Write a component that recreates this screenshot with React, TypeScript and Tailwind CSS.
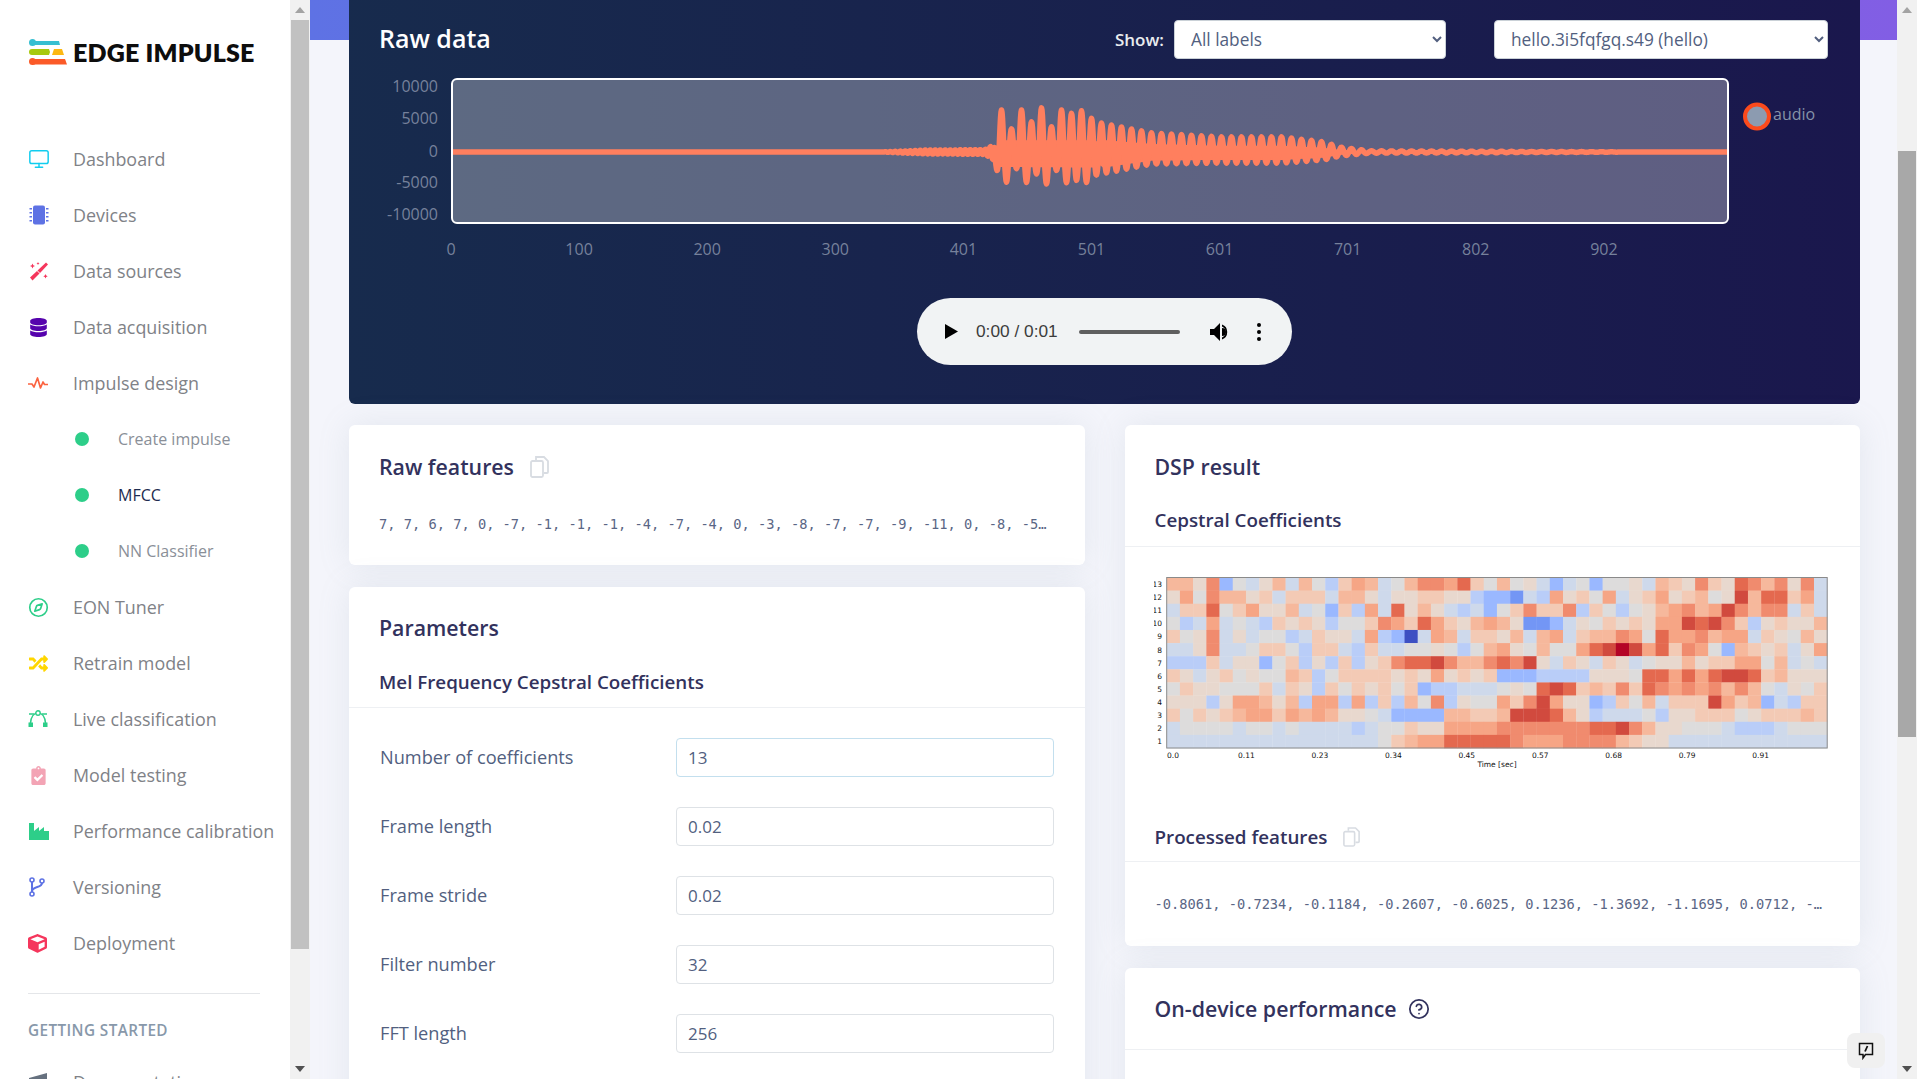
import { CircleHelp, Compass, Monitor } from "lucide-react";
import { FaClipboardCheck, FaCube, FaDatabase, FaRandom } from "react-icons/fa";
import type { ReactNode } from "react";

const CHIP = (
  <svg width="20" height="20" viewBox="0 0 20 20" className="ml-px text-[#5e72e4]">
    <rect x="4" y="0.5" width="12" height="19" rx="2" fill="currentColor" />
    {[3, 7, 11, 15].map((y) => (
      <g key={y} fill="currentColor">
        <rect x="0.5" y={y} width="2.5" height="1.5" />
        <rect x="17" y={y} width="2.5" height="1.5" />
      </g>
    ))}
  </svg>
);

const WAND = (
  <svg width="20" height="20" viewBox="0 0 20 20" className="ml-px text-[#f5365c]">
    <path d="M1 16.500L8 10l2.500 2.500L3.500 19.500z" fill="currentColor" />
    <path d="M8.500 9.500L17 1.500l2 2-8 8.500z" fill="currentColor" />
    <path d="M3.500 2.500l.8 1.700 1.700.8-1.700.8-.8 1.700-.8-1.700L1 5l1.700-.8zM9 1l.5 1 1 .5-1 .5-.5 1-.5-1-1-.5 1-.5zM16.500 13l.7 1.500 1.500.7-1.500.7-.7 1.500-.7-1.500-1.500-.7 1.500-.7z" fill="currentColor" />
  </svg>
);

const PULSE = (
  <svg width="20" height="14" viewBox="0 0 20 14" fill="none" className="text-[#fb6340]">
    <path d="M0 8h4l2 3 3.500-9 3 10 2.500-6 1.500 2.500H20" stroke="currentColor" strokeWidth="1.700" strokeLinejoin="round" />
  </svg>
);

const BEZIER = (
  <svg width="20" height="18" viewBox="0 0 20 18" fill="none" className="text-[#2dce89]">
    <path d="M2.5 13C3 7 6 3 10 3s7 4 7.500 10" stroke="currentColor" strokeWidth="1.6" />
    <path d="M1 4h5M14 4h5" stroke="currentColor" strokeWidth="1.4" />
    <circle cx="10" cy="3" r="2.200" stroke="currentColor" strokeWidth="1.4" fill="#fff" />
    <rect x="0.500" y="12.500" width="4.500" height="4.500" fill="currentColor" />
    <rect x="15" y="12.500" width="4.500" height="4.500" fill="currentColor" />
  </svg>
);

const FACTORY = (
  <svg width="20" height="18" viewBox="0 0 20 18" className="ml-px text-[#2dce89]">
    <path d="M0 1h5v8l5-4v4l5-4v4h5v9H0z" fill="currentColor" />
  </svg>
);

const BRANCH = (
  <svg width="16" height="20" viewBox="0 0 16 20" fill="none" className="ml-px text-[#5e72e4]">
    <path d="M3 5v10M13 6c0 5-9 3-10 8" stroke="currentColor" strokeWidth="2" />
    <circle cx="3" cy="3" r="2" stroke="currentColor" strokeWidth="1.600" fill="#fff" />
    <circle cx="13" cy="4" r="2" stroke="currentColor" strokeWidth="1.600" fill="#fff" />
    <circle cx="3" cy="17" r="2" stroke="currentColor" strokeWidth="1.600" fill="#fff" />
  </svg>
);

const NAV_TOP: { label: string; icon: ReactNode }[] = [
  { label: "Dashboard", icon: <Monitor size={22} strokeWidth={1.6} className="text-[#11cdef]" /> },
  { label: "Devices", icon: CHIP },
  { label: "Data sources", icon: WAND },
  { label: "Data acquisition", icon: <FaDatabase size={19} className="ml-px text-[#5603ad]" /> },
  { label: "Impulse design", icon: PULSE },
];

const NAV_SUB = ["Create impulse", "MFCC", "NN Classifier"];

const NAV_BOTTOM: { label: string; icon: ReactNode }[] = [
  { label: "EON Tuner", icon: <Compass size={21} strokeWidth={1.9} className="text-[#2dce89]" /> },
  { label: "Retrain model", icon: <FaRandom size={19} className="ml-px text-[#ffd600]" /> },
  { label: "Live classification", icon: BEZIER },
  { label: "Model testing", icon: <FaClipboardCheck size={19} className="ml-px text-[#f3a4b5]" /> },
  { label: "Performance calibration", icon: FACTORY },
  { label: "Versioning", icon: BRANCH },
  { label: "Deployment", icon: <FaCube size={19} className="text-[#f5365c]" /> },
];

const HEAT_COLORS: Record<string, string> = {
  A: "#3d50c3",
  B: "#7396f5",
  C: "#9ab8ff",
  D: "#b9cdf8",
  E: "#ced9eb",
  F: "#dddcdc",
  G: "#e8d8ce",
  H: "#f3cab5",
  I: "#f6b89c",
  J: "#f6a585",
  K: "#f08b6e",
  L: "#e4694f",
  M: "#d14a3e",
  N: "#b40426",
};

const HEAT_ROWS = [
  "IIGKCFEGIEIFDHJIEFIKKJLHFIFGECEFCFFGEIHGKHGLKIKGKE",
  "GJFKIIGHEHHHEIIGEGGHHGGDCCBEDJGHFJEGHJGHIFGMILLHJE",
  "EHHLFHJGGIEFCHDJELGIGEDECFHKHHKDHFDFGIJKIJMKIKKEHE",
  "FDEJEFEDHGHGDFFHKJHLJHGIJIGBBCEGFHGHGJJMLMKHDGHGGI",
  "HFGKEGEFFDEHGGEJDCAEJIEHHGIEIJEHIIKJFLJJKIJJEHGFIG",
  "EEGKEEFHHFDHHEDHEEFFGFDFIJGFIFFJLMNMJLHKJFCIHGHEGJ",
  "DDDHEGGCFHDGDHDGHKLLMKIIKLKMGEHGEHGEFGGIGHHJJFIEFE",
  "HGEGHFGFFIHDFHHHHGHGJGHGHCCCDDDDGGGFLLJLJLMMLHIGGG",
  "FHGGFFFHEHGDHFHGHFHCDDEEEFGFLMLHIHKHLKJKJKIKIFEGFH",
  "GGGDGJJIGIDJJDJDHDIFKDGFFJHKMJGGCDHFIEHHHMJHICEDHH",
  "HFHGHIJJHJIJIGGFECCCCIIHHIMMMLIGDEEEFDGGHHHFGHHHIH",
  "EFFFFEFFEFEEEEDEFFHGGJJJJKKKKKKKLLMKIGGFFFEDDDEFFF",
  "EEEEEEEEEEEEEEEEFHIJJLLLLLKJJJKKKKIHGGEEEEEEEEEEEE",
];

const TIME_TICKS = ["0.0", "0.11", "0.23", "0.34", "0.45", "0.57", "0.68", "0.79", "0.91"];

const CHART_Y = [
  { label: "10000", y: 86 },
  { label: "5000", y: 118 },
  { label: "0", y: 151 },
  { label: "-5000", y: 182 },
  { label: "-10000", y: 214 },
];

const CHART_X = ["0", "100", "200", "300", "401", "501", "601", "701", "802", "902"];

// x, height above the zero line, depth below it
const ENVELOPE = [
  [452, 0, 0],
  [880, 0, 0],
  [925, 2, 2],
  [985, 2.500, 2.500],
  [995, 8, 9],
  [999, 42, 30],
  [1095, 42, 31],
  [1101, 29, 22],
  [1152, 19, 12],
  [1220, 15, 11],
  [1282, 15, 11],
  [1324, 10, 8],
  [1340, 5, 4],
  [1370, 1.200, 1.200],
  [1500, 0.700, 0.700],
  [1600, 0.300, 0.300],
  [1640, 0, 0],
  [1728, 0, 0],
];

const PEAKS = [1, 0.55, 1, 0.72, 1.05, 0.6, 1, 0.92, 0.98, 0.8];

function envelopeAt(x: number) {
  for (let i = 1; i < ENVELOPE.length; i++) {
    const [x0, up0, down0] = ENVELOPE[i - 1];
    const [x1, up1, down1] = ENVELOPE[i];
    if (x <= x1) {
      const t = (x - x0) / (x1 - x0);
      return [up0 + (up1 - up0) * t, down0 + (down1 - down0) * t];
    }
  }
  return [0, 0];
}

function wavePath() {
  const pts: string[] = [];
  for (let x = 453; x <= 1727; x += 0.5) {
    const [up, down] = envelopeAt(x);
    const t = x - 999;
    // the quiet part before the burst shakes faster
    let s = Math.sin((2 * Math.PI * t) / (x < 995 ? 5 : 10));
    if (x > 999 && x < 1100) s *= PEAKS[Math.floor(t / 10) % 10];
    const y = s > 0 ? 152 - s * up : 152 - s * down;
    pts.push(`${x} ${y.toFixed(1)}`);
  }
  return "M" + pts.join("L");
}

// solid core of the wave, the peaks stick out of this
function waveCore() {
  const top: string[] = [];
  const bottom: string[] = [];
  for (let x = 999; x <= 1370; x += 4) {
    const [up, down] = envelopeAt(x);
    const k = x < 1100 ? 0.28 : 0.42;
    const d = x < 1100 ? 0.5 : 0.72;
    top.push(`${x} ${(152 - up * k).toFixed(1)}`);
    bottom.unshift(`${x} ${(152 + down * d).toFixed(1)}`);
  }
  return "M" + top.concat(bottom).join("L") + "Z";
}

function NavRow({ label, icon }: { label: string; icon: ReactNode }) {
  return (
    <div className="flex h-[56px] shrink-0 items-center pl-[28px]">
      <div className="flex w-[45px] shrink-0 items-center">{icon}</div>
      <span className="whitespace-nowrap text-[17.900px] text-[#808287]">{label}</span>
    </div>
  );
}

function Logo() {
  return (
    <div className="flex items-center pl-[28px] pt-[35px]">
      <svg width="45" height="34" viewBox="28 35 45 34" className="shrink-0">
        <circle cx="32.500" cy="42.500" r="3.500" fill="#36bfd1" />
        <path d="M32 41h27l1 4H32z" fill="#36bfd1" />
        <path d="M32 49h17l1 3-1 3H32a3 3 0 0 1 0-6z" fill="#a8c90e" />
        <path d="M54 49h8l2 6H52z" fill="#fcb813" />
        <circle cx="32.500" cy="61.500" r="3.500" fill="#fb5a28" />
        <path d="M32 59h33l2 5.500H32z" fill="#fb5a28" />
      </svg>
      <span className="whitespace-nowrap font-['Lato','Open_Sans',sans-serif] text-[25px] font-extrabold leading-none tracking-[0.2px] text-[#0d0d0d]">
        EDGE IMPULSE
      </span>
    </div>
  );
}

function Sidebar() {
  return (
    <aside className="flex w-[290px] shrink-0 flex-col overflow-hidden bg-white">
      <div className="h-[131px] shrink-0">
        <Logo />
      </div>
      {NAV_TOP.map((n) => (
        <NavRow key={n.label} {...n} />
      ))}
      {NAV_SUB.map((s) => (
        <div key={s} className="flex h-[56px] shrink-0 items-center pl-[75px]">
          <span className="mr-[29px] h-[14px] w-[14px] shrink-0 rounded-full bg-[#2dce89]" />
          <span className={s === "MFCC" ? "text-[16px] text-[#1d2c50]" : "text-[16px] text-[#8a8f98]"}>{s}</span>
        </div>
      ))}
      {NAV_BOTTOM.map((n) => (
        <NavRow key={n.label} {...n} />
      ))}
      <div className="ml-[28px] mt-[22px] h-px w-[232px] shrink-0 bg-[#e4e6e9]" />
      <div className="ml-[28px] mt-[26px] shrink-0 text-[15.300px] font-semibold leading-5 tracking-[0.4px] text-[#8898aa]">GETTING STARTED</div>
      <div className="mt-[14px] flex h-[56px] shrink-0 items-center pl-[28px]">
        <svg width="20" height="20" viewBox="0 0 20 20" className="mr-[25px] shrink-0 text-[#66717f]">
          <path d="M1 6l18-5v18L1 14z" fill="currentColor" />
        </svg>
        <span className="text-[17.900px] text-[#808287]">Documentation</span>
      </div>
    </aside>
  );
}

function Scrollbar({ width, thumbTop, thumbHeight, thumbColor }: { width: string; thumbTop: string; thumbHeight: string; thumbColor: string }) {
  return (
    <div className={`${width} flex h-full shrink-0 flex-col items-stretch bg-[#f1f1f1]`}>
      <div className="flex h-[20px] shrink-0 items-center justify-center">
        <span className="h-0 w-0 border-x-[5px] border-b-[6px] border-x-transparent border-b-[#a3a3a3]" />
      </div>
      <div className="min-h-0 flex-1 px-[1px]">
        <div className={`${thumbTop} ${thumbHeight} ${thumbColor}`} />
      </div>
      <div className="flex h-[20px] shrink-0 items-center justify-center">
        <span className="h-0 w-0 border-x-[5px] border-t-[6px] border-x-transparent border-t-[#505050]" />
      </div>
    </div>
  );
}

function RawChart() {
  return (
    <svg width="1511" height="220" viewBox="349 60 1511 220" className="block shrink-0" fontFamily="'Open Sans', sans-serif">
      <rect x="452" y="79" width="1276" height="144" rx="5" fill="#ffffff" fillOpacity="0.3" stroke="#ffffff" strokeWidth="2" />
      <path d={waveCore()} fill="#ff7f5e" />
      <path d={wavePath()} fill="none" stroke="#ff7f5e" strokeWidth="5.500" strokeLinejoin="round" />
      {CHART_Y.map((t) => (
        <text key={t.label} x="438" y={t.y + 6} textAnchor="end" fontSize="16" fill="#76819b">
          {t.label}
        </text>
      ))}
      {CHART_X.map((t, i) => (
        <text key={t} x={451 + i * 128.100} y="255" textAnchor="middle" fontSize="16" fill="#76819b">
          {t}
        </text>
      ))}
      <circle cx="1757" cy="116.500" r="12" fill="#8c9bb0" stroke="#fb4a1c" strokeWidth="4" />
      <text x="1773" y="120" fontSize="16" fill="#8592a8">
        audio
      </text>
    </svg>
  );
}

function AudioPlayer() {
  return (
    <div className="mx-auto mt-[18px] flex h-[67px] w-[375px] items-center rounded-full bg-[#f1f3f4] pl-[28px] font-['Liberation_Sans',sans-serif] text-[#1d1d1d]">
      <svg width="13" height="15" viewBox="0 0 13 15" className="shrink-0">
        <path d="M0 0l13 7.500L0 15z" fill="#000" />
      </svg>
      <span className="ml-[18px] mt-px w-[83px] shrink-0 whitespace-nowrap text-[17.300px] text-[#3c3c3c]">0:00 / 0:01</span>
      <div className="ml-[20px] h-[4px] w-[101px] shrink-0 rounded-full bg-[#5f5f5f]" />
      <svg width="20" height="20" viewBox="0 0 20 20" className="ml-[30px] shrink-0">
        <path d="M0 7v6h4l6 6V1L4 7z" fill="#000" />
        <path d="M12 2.500a8 8 0 0 1 0 15v-2a6 6 0 0 0 0-11z" fill="#000" />
        <path d="M12 6a4 4 0 0 1 0 8z" fill="#000" />
      </svg>
      <div className="ml-[27px] flex shrink-0 flex-col gap-[3px]">
        <span className="h-[4px] w-[4px] rounded-full bg-black" />
        <span className="h-[4px] w-[4px] rounded-full bg-black" />
        <span className="h-[4px] w-[4px] rounded-full bg-black" />
      </div>
    </div>
  );
}

function RawDataCard() {
  return (
    <section className="flex h-[404px] flex-col rounded-b-md bg-[linear-gradient(87deg,#172b4d,#1a174d)] pt-[20px]">
      <div className="flex h-[39px] shrink-0 items-center pl-[30px] pr-[32px]">
        <h2 className="-mt-[2px] text-[25px] font-semibold text-white">Raw data</h2>
        <span className="ml-auto mr-[10px] text-[17px] font-semibold text-[#e9ecef]">Show:</span>
        <select defaultValue="all" className="h-[39px] w-[272px] rounded-[4px] border border-[#cad1d7] bg-white pl-[12px] pr-[4px] text-[17.300px] text-[#525f7f]">
          <option value="all">All labels</option>
        </select>
        <select defaultValue="h" className="ml-[48px] h-[39px] w-[334px] rounded-[4px] border border-[#cad1d7] bg-white pl-[12px] pr-[4px] text-[17.300px] text-[#525f7f]">
          <option value="h">hello.3i5fqfgq.s49 (hello)</option>
        </select>
      </div>
      <div className="mt-px">
        <RawChart />
      </div>
      <AudioPlayer />
    </section>
  );
}

function CopyIcon() {
  return (
    <svg width="19" height="22" viewBox="0 0 19 22" fill="none" stroke="#d8dce2" strokeWidth="1.800" className="shrink-0">
      <path d="M6 4V1h8l4 4v11a1 1 0 0 1-1 1h-3" />
      <rect x="1" y="5" width="12" height="16" rx="1.500" />
    </svg>
  );
}

function FormRow({ label, value, focused }: { label: string; value: string; focused?: boolean }) {
  return (
    <div className="flex h-[39px] items-center">
      <label className="w-[296px] shrink-0 text-[18.200px] font-medium text-[#525f7f]">{label}</label>
      <input
        readOnly
        value={value}
        className={
          focused
            ? "h-[39px] w-[378px] rounded-[4px] border border-[#c3dfee] bg-white px-[11px] text-[17px] text-[#525f7f]"
            : "h-[39px] w-[378px] rounded-[4px] border border-[#dee2e6] bg-white px-[11px] text-[17px] text-[#525f7f]"
        }
      />
    </div>
  );
}

function Heatmap() {
  const left = 1166.700;
  const top = 577.500;
  const cw = 660.500 / 50;
  const ch = 170.500 / 13;
  return (
    <svg width="688" height="210" viewBox="1154 565 688 210" className="block" fontFamily="'DejaVu Sans', sans-serif" fontSize="7.500" fill="#111">
      <g className="blur-[0.5px]">
        {HEAT_ROWS.map((row, r) =>
          row.split("").map((c, i) => (
            <rect key={`${r}-${i}`} x={left + i * cw} y={top + r * ch} width={cw + 0.300} height={ch + 0.300} fill={HEAT_COLORS[c]} />
          ))
        )}
      </g>
      <rect x={left} y={top} width="660.500" height="170.500" fill="none" stroke="#8a8a8a" strokeWidth="1" />
      {HEAT_ROWS.map((_, r) => (
        <text key={r} x="1162" y={top + r * ch + 9.500} textAnchor="end">
          {13 - r}
        </text>
      ))}
      {TIME_TICKS.map((t, i) => (
        <text key={t} x={1173 + i * 73.450} y="758" textAnchor="middle">
          {t}
        </text>
      ))}
      <text x="1497" y="767" textAnchor="middle">
        Time [sec]
      </text>
    </svg>
  );
}

function App() {
  return (
    <div className="flex h-screen w-full overflow-hidden bg-white font-['Open_Sans',sans-serif]">
      <Sidebar />
      <Scrollbar width="w-[20px]" thumbTop="mt-0" thumbHeight="h-[929px]" thumbColor="bg-[#c1c1c1]" />
      <main className="min-w-0 flex-1 overflow-hidden bg-[#f4f5fb] bg-[linear-gradient(87deg,#5e72e4,#825ee4)] bg-[length:100%_40px] bg-no-repeat pl-[39px] pr-[37px]">
        <RawDataCard />
        <div className="mt-[21px] grid grid-cols-2 items-start gap-[40px]">
          <div className="flex flex-col gap-[22px]">
            <section className="rounded-md bg-white pb-[26px] shadow-[0_0_32px_rgba(136,152,170,0.15)]">
              <div className="flex h-[84px] items-center gap-[16px] pl-[30px]">
                <h3 className="text-[21.300px] font-[550] text-[#32325d]">Raw features</h3>
                <CopyIcon />
              </div>
              <div className="flex h-[30px] items-center pl-[30px]">
                <p className="whitespace-nowrap font-['DejaVu_Sans_Mono',monospace] text-[13.700px] text-[#5a6685]">
                  7, 7, 6, 7, 0, -7, -1, -1, -1, -4, -7, -4, 0, -3, -8, -7, -7, -9, -11, 0, -8, -5…
                </p>
              </div>
            </section>
            <section className="rounded-md bg-white pb-[40px] shadow-[0_0_32px_rgba(136,152,170,0.15)]">
              <div className="flex h-[82px] items-center pl-[30px]">
                <h3 className="text-[21.300px] font-[550] text-[#32325d]">Parameters</h3>
              </div>
              <div className="flex h-[39px] items-center border-b border-[#eef0f3] pb-[11px] pl-[30px]">
                <h4 className="text-[18.800px] font-[550] text-[#32325d]">Mel Frequency Cepstral Coefficients</h4>
              </div>
              <div className="flex flex-col gap-[30px] pl-[31px] pt-[30px]">
                <FormRow label="Number of coefficients" value="13" focused />
                <FormRow label="Frame length" value="0.02" />
                <FormRow label="Frame stride" value="0.02" />
                <FormRow label="Filter number" value="32" />
                <FormRow label="FFT length" value="256" />
                <FormRow label="Low frequency" value="300" />
              </div>
            </section>
          </div>
          <div className="flex flex-col gap-[22px]">
            <section className="rounded-md bg-white shadow-[0_0_32px_rgba(136,152,170,0.15)]">
              <div className="flex h-[77px] items-center pl-[30px] pt-[7px]">
                <h3 className="text-[21.300px] font-[550] text-[#32325d]">DSP result</h3>
              </div>
              <div className="flex h-[45px] items-center border-b border-[#eef0f3] pb-[7px] pl-[30px]">
                <h4 className="text-[18.800px] font-[550] text-[#32325d]">Cepstral Coefficients</h4>
              </div>
              <div className="pl-[29px] pt-[18px]">
                <Heatmap />
              </div>
              <div className="h-[87px] border-b border-[#eef0f3] pt-[37px]">
                <div className="flex h-[50px] items-center gap-[16px] pl-[30px]">
                  <h4 className="text-[18.800px] font-[550] text-[#32325d]">Processed features</h4>
                  <svg width="17" height="20" viewBox="0 0 19 22" fill="none" stroke="#d8dce2" strokeWidth="1.800" className="shrink-0">
                    <path d="M6 4V1h8l4 4v11a1 1 0 0 1-1 1h-3" />
                    <rect x="1" y="5" width="12" height="16" rx="1.500" />
                  </svg>
                </div>
              </div>
              <div className="flex h-[84px] items-center pl-[30px]">
                <p className="whitespace-nowrap font-['DejaVu_Sans_Mono',monospace] text-[13.700px] text-[#5a6685]">
                  -0.8061, -0.7234, -0.1184, -0.2607, -0.6025, 0.1236, -1.3692, -1.1695, 0.0712, -…
                </p>
              </div>
            </section>
            <section className="h-[300px] rounded-md bg-white shadow-[0_0_32px_rgba(136,152,170,0.15)]">
              <div className="flex h-[82px] items-center gap-[11px] border-b border-[#eef0f3] pl-[30px] pt-px">
                <h3 className="text-[21.300px] font-[550] text-[#32325d]">On-device performance</h3>
                <CircleHelp size={22} strokeWidth={1.9} className="text-[#32325d]" />
              </div>
            </section>
          </div>
        </div>
      </main>
      <Scrollbar width="w-[20px]" thumbTop="mt-[131px]" thumbHeight="h-[586px]" thumbColor="bg-[#a8a8a8]" />
      <button className="fixed bottom-[11px] right-[32px] flex h-[35px] w-[38px] items-center justify-center rounded-lg bg-[#f0f0f0]">
        <svg width="16" height="18" viewBox="0 0 16 18" fill="none" stroke="#111" strokeWidth="1.500">
          <path d="M1.500 1.500h13v11h-7L5 16v-3.500H1.500z" />
          <path d="M9.500 4L7 9.500" strokeWidth="1.800" />
        </svg>
      </button>
    </div>
  );
}

export default App;
